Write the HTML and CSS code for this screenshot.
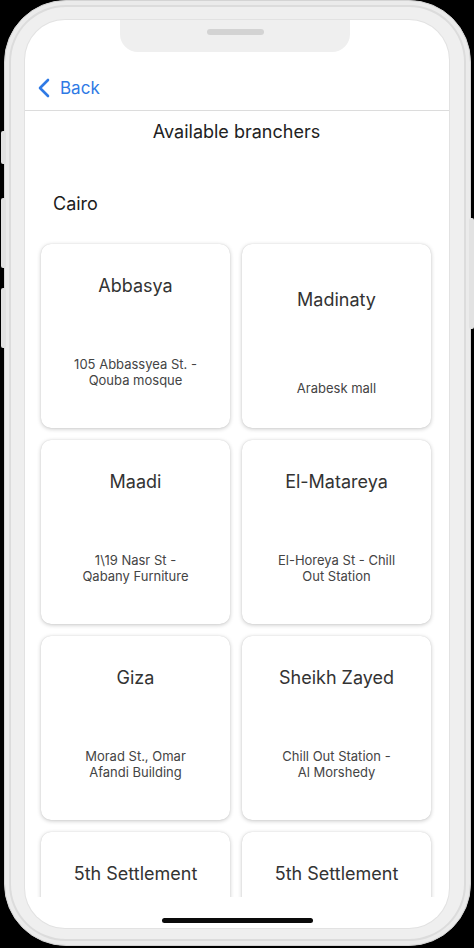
FILE: index.html
```html
<!DOCTYPE html>
<html lang="en">
<head>
<meta charset="utf-8">
<title>Available branchers</title>
<link rel="stylesheet" href="styles.css">
</head>
<body>
<div class="phone">
  <span class="btn btn-l1"></span>
  <span class="btn btn-l2"></span>
  <span class="btn btn-l3"></span>
  <span class="btn btn-r1"></span>
  <div class="screen">
    <div class="notch"><span class="speaker"></span></div>
    <header class="nav">
      <a class="back">
        <svg class="chev" width="14" height="20" viewBox="0 0 14 20"><path d="M11 2 L3 10 L11 18" fill="none" stroke="#2f7ae5" stroke-width="2.6" stroke-linecap="round" stroke-linejoin="round"/></svg>
        <span>Back</span>
      </a>
    </header>
    <main class="scroll">
      <h1 class="title">Available branchers</h1>
      <h2 class="city">Cairo</h2>
      <div class="grid">
        <div class="card">
          <div class="card-name">Abbasya</div>
          <div class="card-addr">105 Abbassyea St. -<br>Qouba mosque</div>
        </div>
        <div class="card card--single">
          <div class="card-name">Madinaty</div>
          <div class="card-addr">Arabesk mall</div>
        </div>
        <div class="card">
          <div class="card-name">Maadi</div>
          <div class="card-addr">1\19 Nasr St -<br>Qabany Furniture</div>
        </div>
        <div class="card">
          <div class="card-name">El-Matareya</div>
          <div class="card-addr">El-Horeya St - Chill<br>Out Station</div>
        </div>
        <div class="card">
          <div class="card-name">Giza</div>
          <div class="card-addr">Morad St., Omar<br>Afandi Building</div>
        </div>
        <div class="card">
          <div class="card-name">Sheikh Zayed</div>
          <div class="card-addr">Chill Out Station -<br>Al Morshedy</div>
        </div>
        <div class="card">
          <div class="card-name">5th Settlement</div>
          <div class="card-addr">&nbsp;<br>&nbsp;</div>
        </div>
        <div class="card">
          <div class="card-name">5th Settlement</div>
          <div class="card-addr">&nbsp;<br>&nbsp;</div>
        </div>
      </div>
    </main>
    <footer class="home"><span class="indicator"></span></footer>
  </div>
</div>
</body>
</html>
```

FILE: styles.css
```css
* { box-sizing: border-box; }
html, body { margin: 0; padding: 0; }
body {
  background: #000;
  width: 474px;
  height: 948px;
  overflow: hidden;
  font-family: "Inter", "Liberation Sans", sans-serif;
}
.phone {
  position: relative;
  margin: 0 3px 0 4px;
  height: 946px;
  border-radius: 62px;
  background: #efefef;
  border: 1px solid #d4d4d4;
  box-shadow: inset 0 0 0 4px #ebebeb, inset 0 0 0 6px #dcdcdc;
  padding: 19px 21px 17px 20px;
}
.btn {
  position: absolute;
  width: 5px;
  background: #e2e2e2;
  border-radius: 2px;
}
.btn-l1 { left: -4px; top: 130px; height: 33px; }
.btn-l2 { left: -4px; top: 197px; height: 70px; }
.btn-l3 { left: -4px; top: 287px; height: 60px; }
.btn-r1 { right: -4px; top: 217px; height: 111px; }
.screen {
  position: relative;
  height: 908px;
  background: #fff;
  border-radius: 40px;
  overflow: hidden;
  display: flex;
  flex-direction: column;
  box-shadow: 0 0 0 1px #e2e2e2;
}
.notch {
  position: absolute;
  top: 0;
  left: 95px;
  width: 230px;
  height: 32px;
  background: #efefef;
  border-radius: 0 0 18px 18px;
  display: flex;
  justify-content: center;
  padding-top: 9px;
}
.speaker {
  width: 57px;
  height: 6px;
  border-radius: 3px;
  background: #d3d3d3;
}
.nav {
  height: 91px;
  flex: none;
  border-bottom: 1px solid #dcdcdc;
  display: flex;
  align-items: flex-end;
  padding: 0 0 10px 12px;
}
.back {
  display: flex;
  align-items: center;
  gap: 9px;
  color: #2f7ae5;
  font-size: 17px;
  line-height: 24px;
}
.chev { display: block; }
.scroll {
  flex: 1;
  overflow: hidden;
  padding: 9px 17px 0 16px;
}
.title {
  margin: 0;
  text-align: center;
  font-size: 18px;
  line-height: 24px;
  font-weight: 400;
  color: #222;
}
.city {
  margin: 48px 0 0;
  padding-left: 12px;
  font-size: 18px;
  line-height: 24px;
  font-weight: 400;
  color: #1c1c1c;
}
.grid {
  margin-top: 28px;
  display: grid;
  grid-template-columns: 189px 189px;
  grid-auto-rows: 184px;
  gap: 12px;
}
.card {
  background: #fff;
  border-radius: 10px;
  box-shadow: 0 1px 4px rgba(0, 0, 0, 0.22), 0 0 1px rgba(0, 0, 0, 0.15);
  display: flex;
  flex-direction: column;
  justify-content: space-between;
  align-items: center;
  text-align: center;
  padding: 30px 8px 40px;
}
.card--single { padding: 44px 8px 32px; }
.card-name {
  font-size: 18px;
  line-height: 24px;
  color: #333;
}
.card-addr {
  font-size: 13px;
  line-height: 16px;
  color: #444;
}
.home {
  flex: none;
  height: 31px;
  display: flex;
  justify-content: center;
  align-items: flex-end;
  padding-bottom: 5px;
}
.indicator {
  width: 151px;
  height: 5px;
  border-radius: 3px;
  background: #0a0a0a;
}
```
